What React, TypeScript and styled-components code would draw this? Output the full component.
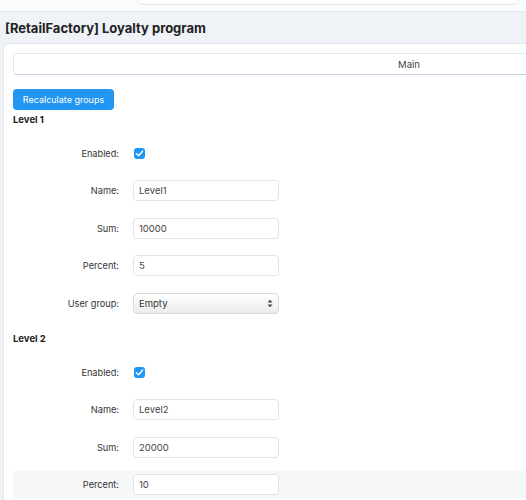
import styled, { createGlobalStyle } from 'styled-components';

const GlobalStyle = createGlobalStyle`
  body {
    margin: 0;
    background: #eff2f7;
    font-family: Inter, "Noto Sans", "Liberation Sans", sans-serif;
    color: #333;
    overflow: hidden;
  }
`;

type Field = {
  label: string;
  kind: 'check' | 'text' | 'select';
  value?: string;
  hover?: boolean;
};

const levels: { title: string; fields: Field[] }[] = [
  {
    title: 'Level 1',
    fields: [
      { label: 'Enabled:', kind: 'check' },
      { label: 'Name:', kind: 'text', value: 'Level1' },
      { label: 'Sum:', kind: 'text', value: '10000' },
      { label: 'Percent:', kind: 'text', value: '5' },
      { label: 'User group:', kind: 'select', value: 'Empty' },
    ],
  },
  {
    title: 'Level 2',
    fields: [
      { label: 'Enabled:', kind: 'check' },
      { label: 'Name:', kind: 'text', value: 'Level2' },
      { label: 'Sum:', kind: 'text', value: '20000' },
      { label: 'Percent:', kind: 'text', value: '10', hover: true },
    ],
  },
];

export default function App() {
  return (
    <Page>
      <GlobalStyle />
      <TopBar>
        <SearchBox />
      </TopBar>
      <Header>
        <Title>[RetailFactory] Loyalty program</Title>
      </Header>
      <Card>
        <Tab>Main</Tab>
        <PrimaryButton>Recalculate groups</PrimaryButton>
        {levels.map((level) => (
          <Section key={level.title}>
            <SectionTitle>{level.title}</SectionTitle>
            {level.fields.map((f) => (
              <Row key={f.label} $hover={f.hover}>
                <Label>{f.label}</Label>
                {f.kind === 'check' && (
                  <Check>
                    <svg width="9" height="9" viewBox="0 0 10 10">
                      <path
                        d="M1.6 5.2 L4 7.4 L8.4 2.4"
                        fill="none"
                        stroke="#fff"
                        strokeWidth="1.6"
                        strokeLinecap="round"
                        strokeLinejoin="round"
                      />
                    </svg>
                  </Check>
                )}
                {f.kind === 'text' && <Input>{f.value}</Input>}
                {f.kind === 'select' && (
                  <Select>
                    <span>{f.value}</span>
                    <svg width="6" height="9" viewBox="0 0 6 9">
                      <path d="M0.5 3.6 L3 0.8 L5.5 3.6 Z" fill="#444" />
                      <path d="M0.5 5.4 L3 8.2 L5.5 5.4 Z" fill="#444" />
                    </svg>
                  </Select>
                )}
              </Row>
            ))}
          </Section>
        ))}
      </Card>
    </Page>
  );
}

const Page = styled.div`
  width: 526px;
  height: 500px;
  overflow: hidden;
`;

const TopBar = styled.div`
  height: 11px;
  background: #fbfcfd;
  overflow: hidden;
`;

const SearchBox = styled.div`
  margin: -27px 0 0 137px;
  width: 380px;
  height: 30px;
  background: #fff;
  border: 1px solid #dfe4ec;
  border-radius: 6px;
`;

const Header = styled.div`
  height: 31px;
  display: flex;
  align-items: center;
  padding: 0 5px;
  border-top: 1px solid #e4e8ef;
  background: #eff2f7;
`;

const Title = styled.h1`
  margin: 0;
  font-size: 13px;
  font-weight: 700;
  color: #222;
`;

const Card = styled.div`
  margin-left: 3px;
  width: 830px;
  min-height: 460px;
  background: #fff;
  border: 1px solid #e3e8f0;
  border-radius: 5px 0 0 0;
  padding: 9px 9px;
`;

const Tab = styled.div`
  width: 790px;
  height: 20px;
  display: flex;
  align-items: center;
  justify-content: center;
  border: 1px solid #e2e7f0;
  border-bottom: 1px solid #c6d0e2;
  border-radius: 4px;
  font-size: 9.5px;
  color: #444;
`;

const PrimaryButton = styled.button`
  margin-top: 14px;
  height: 21px;
  width: 101px;
  padding: 0;
  border: none;
  border-radius: 4px;
  background: #2196f3;
  color: #fff;
  font-family: inherit;
  font-size: 9px;
  display: block;
`;

const Section = styled.div`
  display: flow-root;
  margin-top: 3px;
  & + & {
    margin-top: 5px;
  }
`;

const SectionTitle = styled.div`
  height: 14px;
  line-height: 14px;
  font-size: 9.5px;
  font-weight: 700;
  color: #222;
  margin-bottom: 12.5px;
`;

const Row = styled.div<{ $hover?: boolean }>`
  height: 27px;
  margin-bottom: 10.5px;
  display: grid;
  grid-template-columns: 106px 146px;
  column-gap: 14px;
  align-items: center;
  background: ${(p) => (p.$hover ? '#f6f7f9' : 'transparent')};
`;

const Label = styled.div`
  text-align: right;
  font-size: 9.2px;
  color: #333;
`;

const Check = styled.span`
  width: 11px;
  height: 11px;
  border-radius: 3px;
  background: #2196f3;
  display: flex;
  align-items: center;
  justify-content: center;
  margin-left: 1px;
`;

const Input = styled.div`
  height: 21px;
  box-sizing: border-box;
  border: 1px solid #dfe3ea;
  border-radius: 4px;
  background: #fff;
  padding: 0 5px;
  display: flex;
  align-items: center;
  font-size: 9.5px;
  color: #444;
`;

const Select = styled.div`
  height: 21px;
  box-sizing: border-box;
  border: 1px solid #d6d9de;
  border-radius: 4px;
  background: linear-gradient(#ffffff, #ececec);
  box-shadow: inset 0 1px 0 #fff;
  padding: 0 5px;
  display: flex;
  align-items: center;
  justify-content: space-between;
  font-size: 9.5px;
  color: #333;
`;
